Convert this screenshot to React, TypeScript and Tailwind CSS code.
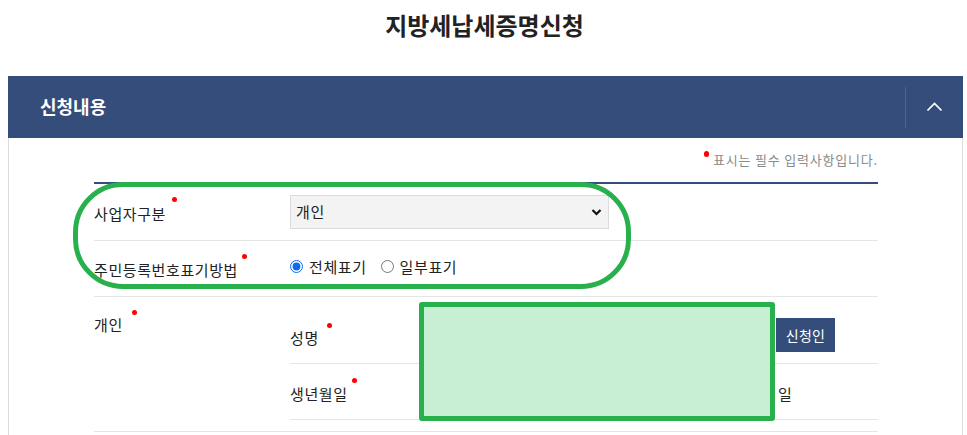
import React from "react";

function Dot({ className = "" }: { className?: string }) {
  return <span className={"absolute w-[5px] h-[5px] rounded-full bg-[#f00] " + className} />;
}

function Label({ text, dotCls }: { text: string; dotCls: string }) {
  return (
    <span className="relative inline-block">
      {text}
      <Dot className={dotCls} />
    </span>
  );
}

export default function App() {
  return (
    <div className="relative w-[967px] h-[435px] overflow-hidden bg-white text-[#222] font-['Noto_Sans_CJK_KR','Noto_Sans',sans-serif]">
      {/* Title */}
      <div className="h-[76px] flex justify-center pt-[7px]">
        <h1 className="text-[24px] leading-[36px] font-bold tracking-[0px] text-[#222] pl-[2px]">지방세납세증명신청</h1>
      </div>

      {/* Panel */}
      <div className="ml-[8px] w-[955px]">
        <div className="h-[62px] bg-[#344d7a] flex items-center">
          <div className="flex-1 pl-[32px] text-white text-[18px] font-bold tracking-[0px] leading-[26px] pb-[2px]">신청내용</div>
          <div className="w-[58px] h-[41px] border-l border-[#4c6490] flex items-center justify-center">
            <svg width="17" height="10" viewBox="0 0 17 10" fill="none">
              <path d="M1.5 8.5 L8.5 1.5 L15.5 8.5" stroke="white" strokeWidth="1.7" />
            </svg>
          </div>
        </div>

        <div className="border-l border-r border-[#dcdcdc] pl-[85px] pr-[84px] h-[300px] text-[15px] tracking-[0.6px]">
          {/* required note */}
          <div className="h-[44px] pt-[12px] flex justify-end">
            <span className="relative text-[13px] leading-[20px] text-[#8a8a8a] tracking-[0.8px]">
              <span className="absolute left-[-9px] top-[1px] w-[5px] h-[6px] rounded-full bg-[#f00]" />
              표시는 필수 입력사항입니다.
            </span>
          </div>

          {/* table */}
          <div className="border-t-2 border-[#344d7a]">
            {/* row 1 */}
            <div className="h-[57px] border-b border-[#e6e6e6] flex items-center">
              <div className="w-[196px] leading-[22px] pt-[4px]">
                <Label text="사업자구분" dotCls="right-[-11px] top-[-6px]" />
              </div>
              <div className="w-[319px] h-[34px] bg-[#f3f3f3] border border-[#dcdcdc] flex items-center justify-between pl-[5px] pr-[6px]">
                <span className="leading-[22px] text-[#222]">개인</span>
                <svg width="11" height="8" viewBox="0 0 11 8" fill="none">
                  <path d="M1.5 2 L5.5 6 L9.5 2" stroke="#111" strokeWidth="2.2" />
                </svg>
              </div>
            </div>

            {/* row 2 */}
            <div className="h-[56px] border-b border-[#e6e6e6] flex items-center">
              <div className="w-[196px] leading-[22px] pt-[3px]">
                <Label text="주민등록번호표기방법" dotCls="right-[-9px] top-[-5px]" />
              </div>
              <div className="flex items-center leading-[22px] pb-[4px]">
                <input type="radio" name="m" defaultChecked className="w-[13px] h-[13px] m-0 accent-[#0b6cf0]" />
                <span className="ml-[6px]">전체표기</span>
                <input type="radio" name="m" className="w-[13px] h-[13px] m-0 ml-[14px]" />
                <span className="ml-[6px]">일부표기</span>
              </div>
            </div>

            {/* row 3 */}
            <div className="h-[135px] border-b border-[#e6e6e6] flex">
              <div className="w-[196px] leading-[22px] pt-[17px]">
                <Label text="개인" dotCls="right-[-14px] top-[-4px]" />
              </div>
              <div className="flex-1 pt-[10px]">
                <div className="h-[57px] border-b border-[#e6e6e6] flex items-center">
                  <div className="w-[129px] leading-[22px] pt-[6px]">
                    <Label text="성명" dotCls="right-[-13px] top-[-4px]" />
                  </div>
                  <div className="w-[351px] h-[34px] border border-[#dcdcdc] bg-white" />
                  <div className="ml-[6px] w-[59px] h-[34px] bg-[#344d7a] text-white text-[14px] tracking-[0.3px] leading-[20px] flex items-center justify-center">신청인</div>
                </div>
                <div className="h-[56px] border-b border-[#e6e6e6] flex items-center">
                  <div className="w-[129px] leading-[22px] pt-[4px]">
                    <Label text="생년월일" dotCls="right-[-9px] top-[-5px]" />
                  </div>
                  <div className="w-[354px] flex items-center gap-[4px]">
                    <div className="w-[90px] h-[34px] border border-[#dcdcdc]" />
                    <span>년</span>
                    <div className="w-[90px] h-[34px] border border-[#dcdcdc]" />
                    <span>월</span>
                    <div className="w-[90px] h-[34px] border border-[#dcdcdc]" />
                  </div>
                  <span className="ml-[5px] leading-[22px] pt-[4px]">일</span>
                </div>
              </div>
            </div>
          </div>
        </div>
      </div>

      {/* annotation overlays */}
      <div className="absolute left-[73px] top-[182px] w-[558px] h-[107px] border-[5px] border-[#27b04b] rounded-[50px]" />
      <div className="absolute left-[419px] top-[302px] w-[356px] h-[119px] border-[5px] border-[#27b04b] rounded-[3px] bg-[#c8eed3]" />
    </div>
  );
}
